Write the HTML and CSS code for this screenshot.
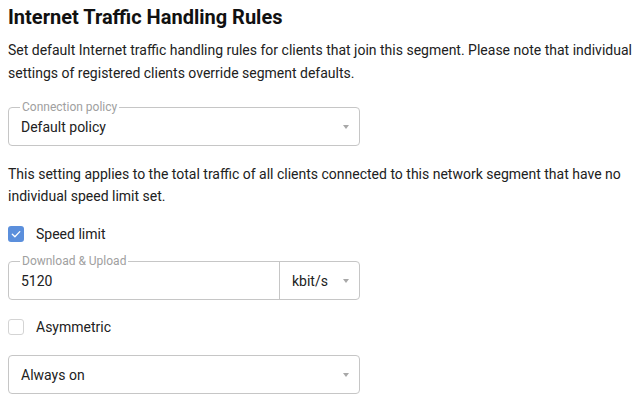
FILE: index.html
```html
<!DOCTYPE html>
<html lang="en">
<head>
<meta charset="utf-8">
<title>Internet Traffic Handling Rules</title>
<link rel="stylesheet" href="styles.css">
</head>
<body>
<main class="page">
  <h1 class="title">Internet Traffic Handling Rules</h1>
  <p class="desc">Set default Internet traffic handling rules for clients that join this segment. Please note that individual settings of registered clients override segment defaults.</p>

  <div class="field field-first">
    <span class="field-label">Connection policy</span>
    <div class="cell cell-grow">
      <span class="value">Default policy</span>
      <span class="arrow"></span>
    </div>
  </div>

  <p class="desc desc-note">This setting applies to the total traffic of all clients connected to this network segment that have no individual speed limit set.</p>

  <label class="check-row check-speed">
    <span class="box box-on">
      <svg viewBox="0 0 16 16" width="16" height="16"><path d="M4.3 8.2 L6.9 10.7 L11.8 5.6" fill="none" stroke="#fff" stroke-width="1.3" stroke-linecap="round" stroke-linejoin="round"/></svg>
    </span>
    <span class="check-text">Speed limit</span>
  </label>

  <div class="field field-speed">
    <span class="field-label">Download &amp; Upload</span>
    <div class="cell cell-grow">
      <span class="value">5120</span>
    </div>
    <div class="cell cell-unit">
      <span class="value">kbit/s</span>
      <span class="arrow"></span>
    </div>
  </div>

  <label class="check-row check-asym">
    <span class="box"></span>
    <span class="check-text">Asymmetric</span>
  </label>

  <div class="field field-last">
    <div class="cell cell-grow">
      <span class="value">Always on</span>
      <span class="arrow"></span>
    </div>
  </div>
</main>
</body>
</html>
```

FILE: styles.css
```css
html, body {
  margin: 0;
  padding: 0;
  background: #ffffff;
}

.page {
  padding: 7px 8px 0 8px;
  width: 352px;
  font-family: Roboto, "Liberation Sans", Arial, sans-serif;
  color: #212121;
}

.title {
  margin: 0;
  font-size: 20px;
  line-height: 20px;
  font-weight: 700;
  color: #111111;
  white-space: nowrap;
}

.desc {
  margin: 12px 0 0 0;
  width: 625px;
  font-size: 14px;
  line-height: 23px;
  color: #212121;
}

.desc-note {
  margin-top: 17px;
  line-height: 22px;
}

.field {
  position: relative;
  display: flex;
  height: 39px;
  box-sizing: border-box;
  border: 1px solid #c6c6c6;
  border-radius: 4px;
}

.field-first {
  margin-top: 22px;
}

.field-speed {
  margin-top: 17px;
}

.field-last {
  margin-top: 18px;
}

.field-label {
  position: absolute;
  top: -8px;
  left: 11px;
  padding: 0 2px;
  background: #ffffff;
  font-size: 12px;
  line-height: 14px;
  color: #a0a0a0;
  white-space: nowrap;
}

.cell {
  display: flex;
  align-items: center;
  padding: 0 10px 0 12px;
  font-size: 14px;
  line-height: 20px;
  color: #212121;
}

.cell-grow {
  flex: 1;
}

.cell-unit {
  width: 80px;
  box-sizing: border-box;
  border-left: 1px solid #c6c6c6;
}

.value {
  flex: 1;
}

.arrow {
  width: 0;
  height: 0;
  border-left: 3.5px solid transparent;
  border-right: 3.5px solid transparent;
  border-top: 4px solid #a8a8a8;
}

.check-row {
  display: flex;
  align-items: center;
  gap: 12px;
  font-size: 14px;
  line-height: 20px;
  color: #212121;
}

.check-speed {
  margin-top: 17px;
}

.check-asym {
  margin-top: 17px;
}

.box {
  width: 16px;
  height: 16px;
  box-sizing: border-box;
  border: 1px solid #d4d4d4;
  border-radius: 3px;
  display: flex;
}

.box-on {
  border: none;
  background: #5b8fdc;
}
```
